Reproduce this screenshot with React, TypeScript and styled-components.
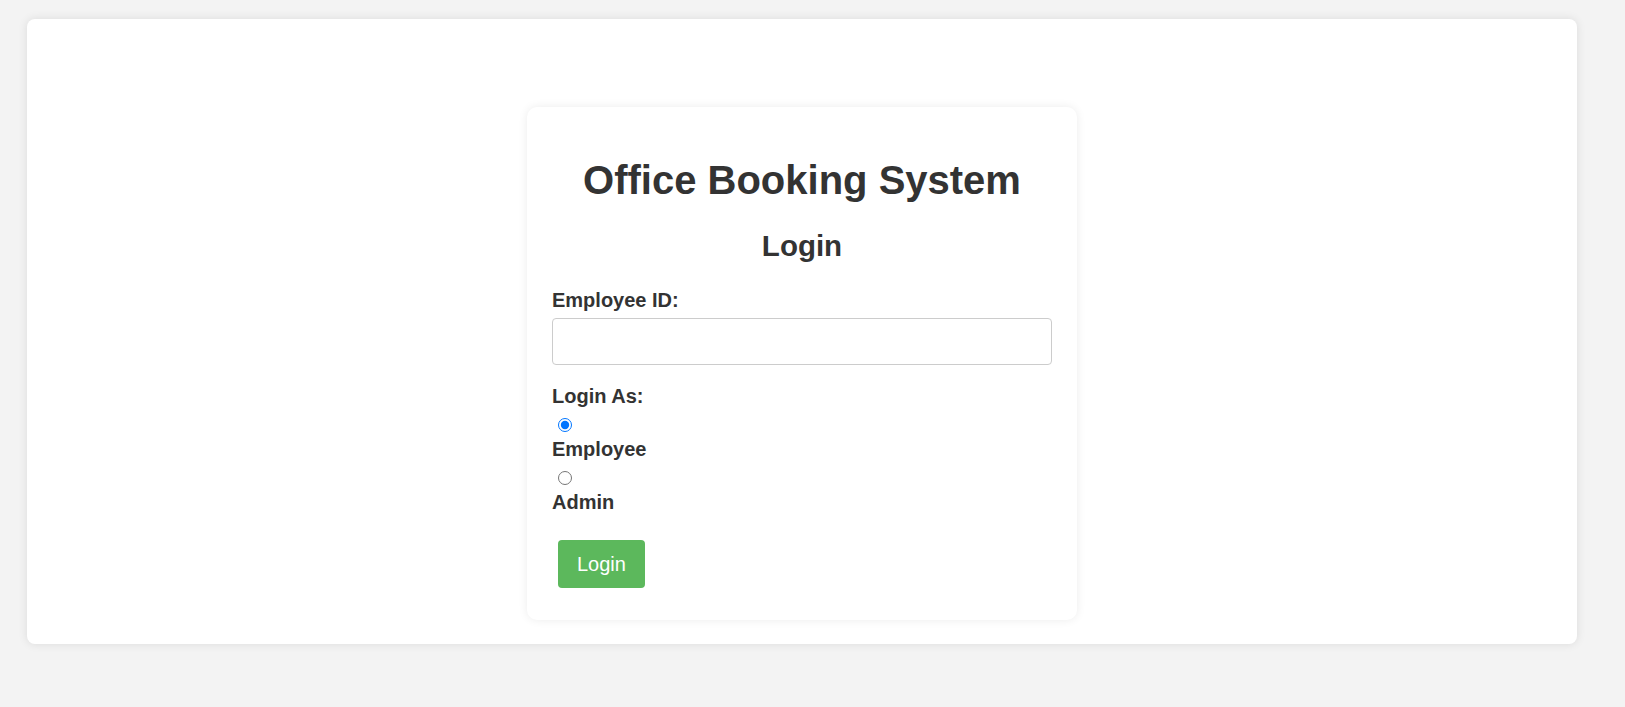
import styled, { createGlobalStyle } from 'styled-components';

const GlobalStyle = createGlobalStyle`
  body {
    margin: 0;
    background: #f3f3f3;
    font-family: "Liberation Sans", Arial, sans-serif;
    color: #333;
  }
`;

const Page = styled.div`
  padding: 19px 0 40px 27px;
`;

const Panel = styled.main`
  width: 1550px;
  box-sizing: border-box;
  background: #fff;
  border-radius: 8px;
  box-shadow: 0 0 10px rgba(0, 0, 0, 0.1);
  padding: 88px 0 24px;
`;

const LoginCard = styled.section`
  width: 550px;
  box-sizing: border-box;
  margin: 0 auto;
  padding: 25px 25px 32px;
  background: #fff;
  border-radius: 10px;
  box-shadow: 0 0 10px rgba(0, 0, 0, 0.08);
`;

const Title = styled.h1`
  font-size: 40px;
  text-align: center;
  margin: 25.5px 0 26.5px;
`;

const Subtitle = styled.h2`
  font-size: 29.5px;
  text-align: center;
  margin: 0 0 26px;
`;

const Label = styled.label`
  display: block;
  font-size: 20px;
  font-weight: bold;
  margin-bottom: 6px;
`;

const TextInput = styled.input`
  display: block;
  width: 100%;
  height: 47px;
  box-sizing: border-box;
  border: 1px solid #ccc;
  border-radius: 4px;
  padding: 10px;
  font-size: 16px;
  margin-bottom: 20px;
`;

const RadioRow = styled.div`
  font-size: 20px;
  line-height: 23px;
  margin-bottom: 1px;
`;

const Radio = styled.input`
  width: 14px;
  height: 14px;
  margin: 3px 3px 0 6px;
  accent-color: #0075ff;
`;

const SubmitButton = styled.button`
  margin: 20px 0 0 6px;
  padding: 12.5px 19px;
  background: #5cb85c;
  color: #fff;
  border: none;
  border-radius: 4px;
  font-family: "Liberation Sans", Arial, sans-serif;
  font-size: 20px;
  cursor: pointer;
`;

export default function App() {
  return (
    <>
      <GlobalStyle />
      <Page>
        <Panel>
          <LoginCard>
            <Title>Office Booking System</Title>
            <Subtitle>Login</Subtitle>
            <form onSubmit={(e) => e.preventDefault()}>
              <Label htmlFor="employeeId">Employee ID:</Label>
              <TextInput id="employeeId" type="text" />
              <Label>Login As:</Label>
              <RadioRow>
                <Radio type="radio" name="role" id="roleEmployee" defaultChecked />
              </RadioRow>
              <Label htmlFor="roleEmployee">Employee</Label>
              <RadioRow>
                <Radio type="radio" name="role" id="roleAdmin" />
              </RadioRow>
              <Label htmlFor="roleAdmin">Admin</Label>
              <SubmitButton type="submit">Login</SubmitButton>
            </form>
          </LoginCard>
        </Panel>
      </Page>
    </>
  );
}
